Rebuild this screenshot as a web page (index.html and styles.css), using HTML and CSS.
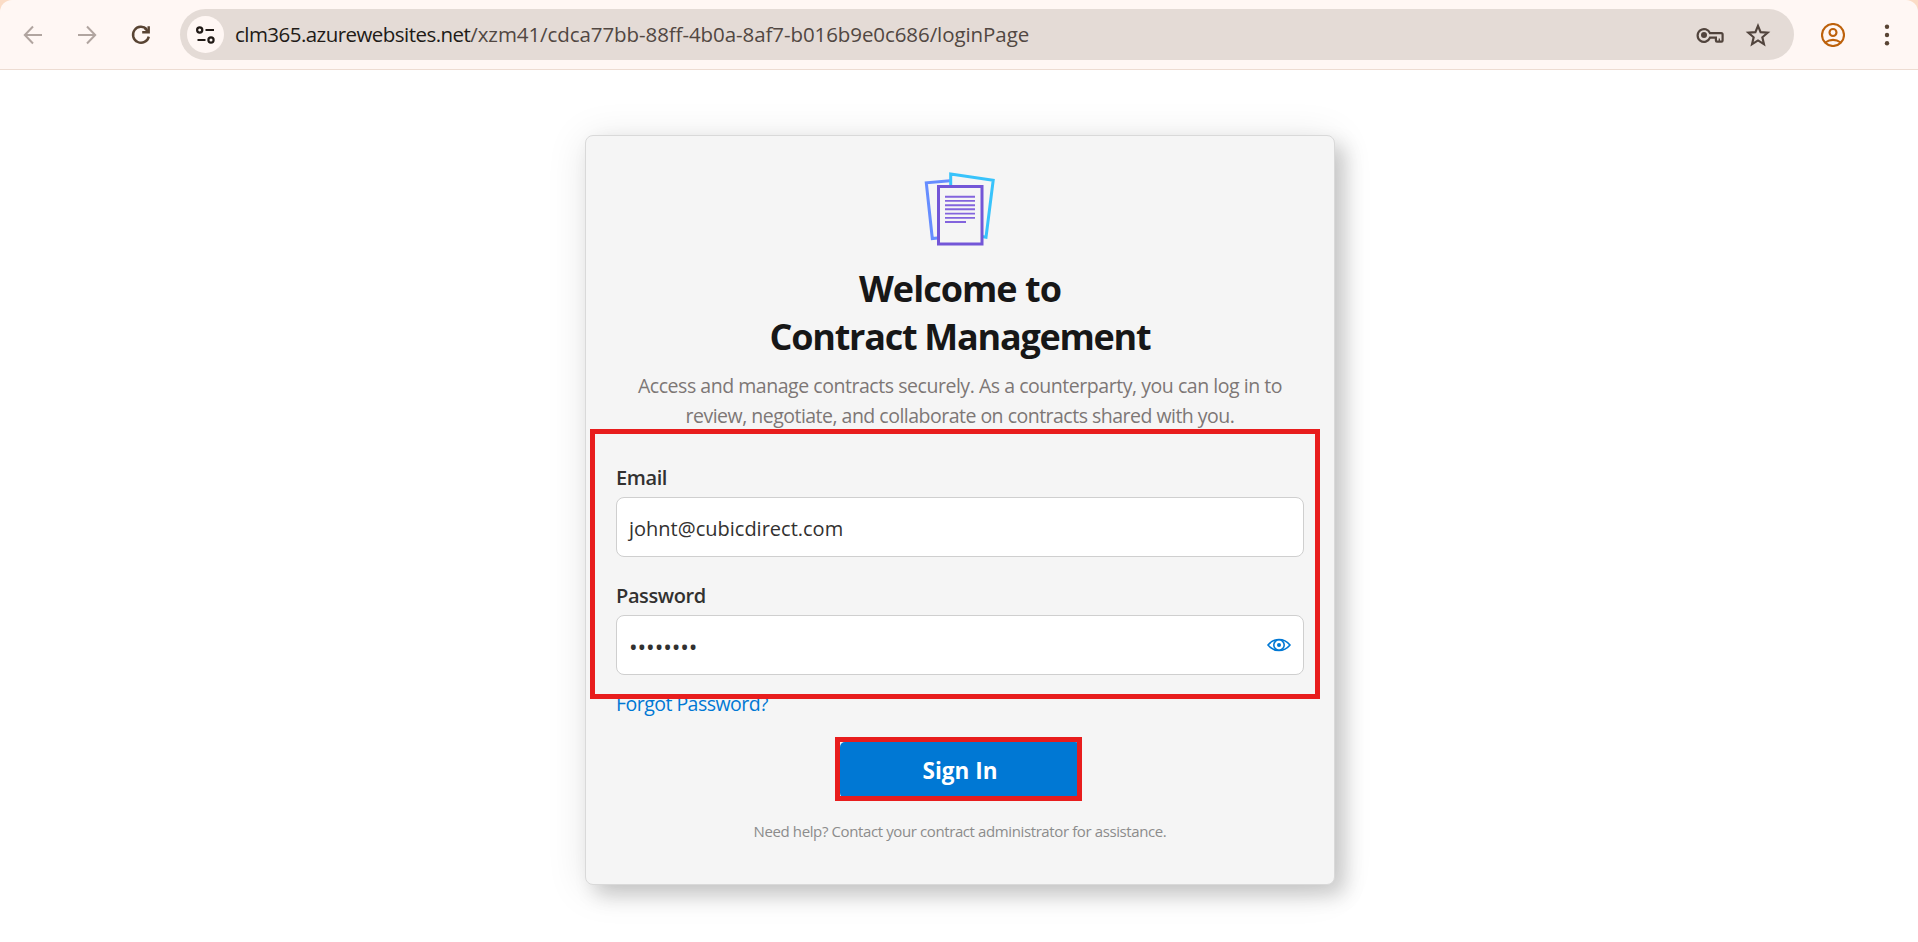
FILE: index.html
```html
<!DOCTYPE html>
<html lang="en">
<head>
<meta charset="utf-8">
<title>Contract Management</title>
<link rel="stylesheet" href="styles.css">
</head>
<body>
<div class="chrome">
  <header class="toolbar">
    <div class="nav">
      <svg class="icon muted" viewBox="0 0 24 24"><path d="M12 3.5 3.8 12 12 20.5M4 12h17"/></svg>
      <svg class="icon muted" viewBox="0 0 24 24"><path d="M12 3.5 20.2 12 12 20.5M20 12H3"/></svg>
      <svg class="icon reload" viewBox="0 0 24 24"><path d="M17.8 6.2A8 8 0 1 0 19.8 13.6"/><path d="M19.7 3.2V9.2H13.2M19.5 9 15.5 5" /></svg>
    </div>
    <div class="address">
      <span class="site"><svg viewBox="0 0 36 36"><circle cx="12.7" cy="14" r="2.6"/><path d="M18.5 14H27M10.5 24H18.5"/><circle cx="24" cy="24" r="2.6"/></svg></span>
      <span class="url"><span class="domain">clm365.azurewebsites.net</span><span class="path">/xzm41/cdca77bb-88ff-4b0a-8af7-b016b9e0c686/loginPage</span></span>
      <svg class="key" viewBox="0 0 28 20"><path d="M14 8.2H25.2Q26.6 8.2 26.6 9.6V15.5Q26.6 16.6 25.5 16.6H21Q19.9 16.6 19.9 15.5V12.7H14A6.4 6.4 0 1 1 14 8.2Z"/><path class="tooth" d="M23.3 13.5V16.5"/><circle class="hole" cx="8" cy="10" r="3"/></svg>
      <svg class="star" viewBox="0 0 24 24"><path d="M12 3.5 14.4 9.4 20.9 9.9 16 14.1 17.5 20.4 12 17 6.5 20.4 8 14.1 3.1 9.9 9.6 9.4Z"/></svg>
    </div>
    <svg class="profile" viewBox="0 0 24 24"><circle cx="12" cy="12" r="11"/><circle cx="12" cy="9.5" r="3.5"/><path d="M4.2 19.5Q12 14.3 19.8 19.5"/></svg>
    <svg class="more" viewBox="0 0 6 24"><circle cx="3" cy="3.7" r="2.2"/><circle cx="3" cy="12" r="2.2"/><circle cx="3" cy="20.3" r="2.2"/></svg>
  </header>
</div>
<main class="page">
  <section class="card">
    <svg class="logo" viewBox="0 0 76 80"><path class="blue" d="M28 12.8 4.3 14.8 10.3 70.5 18 69.8"/><path class="cyan" d="M28.7 18V6L71.2 12.2 64 69.2 60 68.6"/><rect class="purple" x="16.5" y="18.5" width="43.5" height="57.5"/><path class="lines" d="M23 28.7H53M23 32.9H53M23 37.2H53M23 41.3H53M23 45.6H53M23 49.9H53M23 54H44"/></svg>
    <h1><span class="welcome">Welcome to</span><br><span class="product">Contract Management</span></h1>
    <p class="intro"><span class="intro-a">Access and manage contracts securely. As a counterparty, you can log in to</span><br><span class="intro-b">review, negotiate, and collaborate on contracts shared with you.</span></p>
    <div class="form">
      <div class="label email">Email</div>
      <div class="field"><span class="value">johnt@cubicdirect.com</span></div>
      <div class="label password">Password</div>
      <div class="field"><span class="dots">••••••••</span>
        <svg class="eye" viewBox="0 0 24 14"><path d="M1 7Q5.5 1.5 12 1.5T23 7Q18.5 12.5 12 12.5T1 7Z"/><circle cx="12" cy="7" r="5.2"/><circle class="pupil" cx="12" cy="7" r="2"/></svg>
      </div>
      <a class="forgot">Forgot Password?</a>
    </div>
    <button class="signin"><span>Sign In</span></button>
    <p class="help"><span>Need help? Contact your contract administrator for assistance.</span></p>
    <div class="mark mark-form"></div>
    <div class="mark mark-button"></div>
  </section>
</main>
</body>
</html>
```
FILE: styles.css
```css
* { box-sizing: border-box; }
body { margin: 0; height: 942px; overflow: hidden; background: #fff; font-family: "Open Sans", "Noto Sans", sans-serif; }
svg { display: block; fill: none; flex: none; }
h1, p { margin: 0; white-space: nowrap; }

.chrome { background: #fbdcc6; }
.toolbar { height: 70px; display: flex; align-items: center; background: #fff7f4; border-bottom: 1px solid #eddcd2; border-radius: 12px 12px 0 0; padding: 0 28px 0 21px; }
.nav { display: flex; gap: 30px; width: 159px; }
.icon { width: 24px; height: 24px; stroke: #594433; stroke-width: 2.2; }
.icon.muted { stroke: #b1a5a0; stroke-width: 2; }
.icon.reload { stroke-width: 2.4; }
.address { width: 1614px; height: 51px; border-radius: 26px; background: #e4dbd6; display: flex; align-items: center; padding: 0 23px 0 7px; }
.site { width: 37px; height: 37px; border-radius: 50%; background: #fff7f4; flex: none; }
.site svg { width: 36px; height: 36px; stroke: #211a16; stroke-width: 2.2; }
.url { margin-left: 11px; flex: 1; font-size: 20.5px; line-height: 50px; padding-bottom: 2px; white-space: nowrap; }
.domain { color: #211a16; letter-spacing: -.54px; }
.path { color: #514742; letter-spacing: -.08px; }
.key { width: 28px; height: 20px; stroke: #51443d; stroke-width: 2.2; margin-right: 21px; }
.key .hole { fill: #51443d; stroke: none; }
.key .tooth { stroke-width: 1.3; }
.star { width: 26px; height: 26px; stroke: #51443d; stroke-width: 2; }
.profile { width: 24px; height: 24px; margin-left: 27px; stroke: #bd610b; stroke-width: 2.1; }
.more { width: 6px; height: 24px; margin-left: auto; fill: #594433; }

.page { display: flex; justify-content: center; padding: 65px 0 0 2px; }
.card { position: relative; width: 750px; height: 750px; background: #f5f5f5; border: 1px solid #d9d9d9; border-radius: 8px; box-shadow: 10px 10px 20px rgba(0,0,0,.18), 0 4px 40px rgba(0,0,0,.1); text-align: center; padding: 32px 30px 0; }
.logo { width: 76px; height: 80px; margin: 0 auto; stroke-width: 3; }
.logo .blue { stroke: #668dff; }
.logo .cyan { stroke: #38c3fb; }
.logo .purple { stroke: #7356d7; fill: #f5f5f5; }
.logo .lines { stroke: #8364dd; stroke-width: 1.9; }
h1 { margin-top: 17px; font-size: 36px; line-height: 48px; font-weight: 700; color: #171717; }
.welcome { letter-spacing: -.98px; }
.product { letter-spacing: -1.26px; }
.intro { margin-top: 10px; font-size: 19.5px; line-height: 30px; color: #7d7775; }
.intro-a { letter-spacing: -.46px; }
.intro-b { letter-spacing: -.51px; }
.form { display: flex; flex-direction: column; text-align: left; margin-top: 27px; }
.label { font-size: 20px; line-height: 30px; font-weight: 600; color: #323130; margin-top: 5px; letter-spacing: -.4px; }
.field { height: 60px; margin-top: 4px; background: #fff; border: 1px solid #cfcfcf; border-radius: 8px; display: flex; align-items: center; justify-content: space-between; padding: 0 12px; font-size: 20px; color: #323130; }
.value { padding-top: 2px; }
.label.password { margin-top: 24px; }
.dots { font-size: 23px; letter-spacing: -.1px; padding-top: 3px; }
.eye { width: 24px; height: 14px; stroke: #0078d4; stroke-width: 1.6; }
.eye .pupil { fill: #0078d4; stroke: none; }
.forgot { align-self: flex-start; margin-top: 14px; font-size: 19.5px; line-height: 30px; color: #0078d4; white-space: nowrap; letter-spacing: -.53px; }
.signin { display: block; width: 240px; height: 56px; margin: 23px auto 0; padding: 2px 0 0; border: 0; border-radius: 5px; background: #0078d4; color: #fff; font: 700 22.5px/54px "Open Sans", sans-serif; }
.help { margin-top: 21px; font-size: 15px; line-height: 24px; color: #8c8c8c; letter-spacing: -.39px; }
.mark { position: absolute; border: 5px solid #e81d1d; }
.mark-form { left: 4px; top: 293px; width: 730px; height: 270px; }
.mark-button { left: 249px; top: 601px; width: 247px; height: 64px; }
```
